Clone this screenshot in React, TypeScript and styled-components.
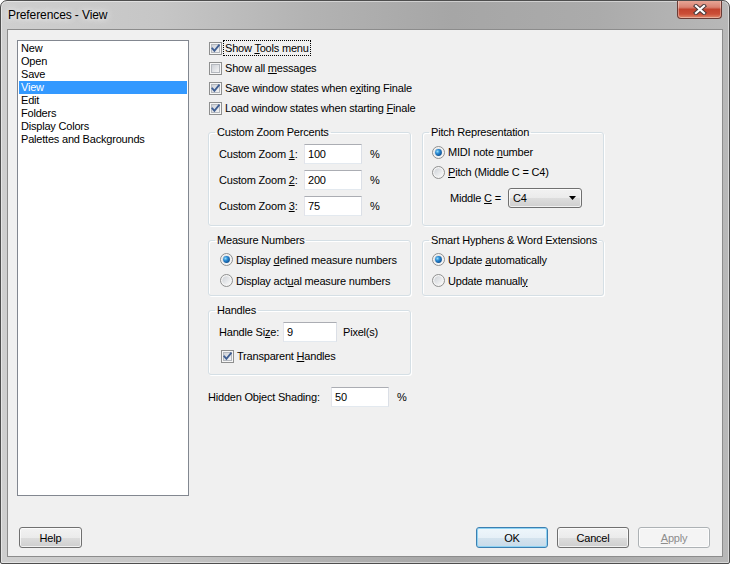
import React from "react";
import styled, { createGlobalStyle } from "styled-components";

const GlobalStyle = createGlobalStyle`
	* {
		box-sizing: border-box;
	}
	html,
	body {
		margin: 0;
		padding: 0;
		width: 730px;
		height: 564px;
		overflow: hidden;
		background: #ffffff;
	}
	body {
		font-family: "Liberation Sans", Arial, sans-serif;
		font-size: 11px;
		letter-spacing: -0.2px;
		color: #000;
	}
`;

const Window = styled.div`
	width: 730px;
	height: 564px;
	display: flex;
	flex-direction: column;
	border: 1px solid #4e4e4e;
	border-radius: 7px 7px 2px 2px;
	background: linear-gradient(
		90deg,
		#cfcfcf 0%,
		#c6c6c6 22%,
		#b3b3b3 42%,
		#a6a6a6 62%,
		#ababab 82%,
		#b8b8b8 100%
	);
	box-shadow: inset 0 0 0 1px rgba(255, 255, 255, 0.45);
	overflow: hidden;
`;

const TitleBar = styled.div`
	height: 28px;
	flex-shrink: 0;
	display: flex;
	align-items: flex-start;
	justify-content: space-between;
	padding: 0 7px 0 7px;
`;

const TitleText = styled.div`
	font-size: 12px;
	letter-spacing: -0.1px;
	line-height: 28px;
	color: #000;
	text-shadow:
		0 0 6px rgba(255, 255, 255, 0.95),
		0 0 12px rgba(255, 255, 255, 0.7);
`;

const CloseButton = styled.div`
	width: 45px;
	height: 19px;
	margin-top: -1px;
	display: flex;
	align-items: center;
	justify-content: center;
	border: 1px solid #6a3b35;
	border-top: none;
	border-radius: 0 0 4px 4px;
	background: linear-gradient(
		#e9aa9b 0%,
		#d98372 40%,
		#c2432e 52%,
		#cb4e37 78%,
		#e08a6c 100%
	);
	box-shadow: inset 0 0 0 1px rgba(255, 255, 255, 0.35);
`;

const Client = styled.div`
	flex: 1;
	margin: 0 6px 6px 6px;
	border: 1px solid #8c8c8c;
	background: #f0f0f0;
	display: flex;
	flex-direction: column;
	padding: 10px 12px 8px 9px;
`;

const Body = styled.div`
	display: flex;
	gap: 19px;
	height: 456px;
`;

const ListBox = styled.div`
	width: 172px;
	height: 456px;
	flex-shrink: 0;
	background: #fff;
	border: 1px solid #828790;
	padding: 1px;
`;

const ListItem = styled.div<{ $selected?: boolean }>`
	height: 13px;
	line-height: 13px;
	padding-left: 2px;
	white-space: nowrap;
	background: ${(p) => (p.$selected ? "#3399ff" : "transparent")};
	color: ${(p) => (p.$selected ? "#fff" : "#000")};
`;

const Panel = styled.div`
	display: flex;
	flex-direction: column;
	margin-top: -2px;
`;

const CheckRow = styled.div<{ $indent?: number }>`
	height: 20px;
	display: flex;
	align-items: center;
	gap: 3px;
	padding-left: ${(p) => p.$indent ?? 1}px;
	white-space: nowrap;
`;

const FocusLabel = styled.span`
	outline: 1px dotted #000;
	outline-offset: 0;
	padding: 0 1px;
	margin-left: -1px;
	line-height: 14px;
`;

const Key = styled.span`
	text-decoration: underline;
	text-underline-offset: 1px;
`;

const Groups = styled.div`
	display: grid;
	grid-template-columns: 203px 182px;
	column-gap: 11px;
	row-gap: 8px;
	margin-top: 8px;
`;

const Group = styled.fieldset`
	margin: 0;
	padding: 0;
	min-width: 0;
	border: 1px solid #d5dfe5;
	border-radius: 3px;
	box-shadow: inset 1px 1px 0 #fff, 1px 1px 0 #fff;
`;

const Legend = styled.legend`
	margin-left: 6px;
	padding: 0 2px;
	line-height: 13px;
	white-space: nowrap;
`;

const GroupBody = styled.div<{ $left: number; $top: number; $bottom: number }>`
	display: flex;
	flex-direction: column;
	padding: ${(p) => p.$top}px 4px ${(p) => p.$bottom}px ${(p) => p.$left}px;
`;

const FieldRow = styled.div<{ $h: number; $mt?: number; $ml?: number }>`
	height: ${(p) => p.$h}px;
	margin-top: ${(p) => p.$mt ?? 0}px;
	margin-left: ${(p) => p.$ml ?? 0}px;
	display: flex;
	align-items: center;
	white-space: nowrap;
`;

const FieldLabel = styled.span<{ $w: number }>`
	width: ${(p) => p.$w}px;
	flex-shrink: 0;
`;

const TextBox = styled.input<{ $w: number }>`
	width: ${(p) => p.$w}px;
	height: 20px;
	flex-shrink: 0;
	margin: 0;
	padding: 0 3px;
	font: inherit;
	letter-spacing: inherit;
	color: #000;
	background: #fff;
	border: 1px solid;
	border-color: #abadb3 #dbdfe6 #e3e9ef #e2e3ea;
	outline: none;
`;

const Unit = styled.span<{ $gap: number }>`
	margin-left: ${(p) => p.$gap}px;
`;

const RadioRow = styled.div<{ $h: number }>`
	height: ${(p) => p.$h}px;
	display: flex;
	align-items: center;
	gap: 3px;
	white-space: nowrap;
`;

const Combo = styled.div`
	width: 74px;
	height: 20px;
	display: flex;
	align-items: center;
	justify-content: space-between;
	padding: 0 5px 0 4px;
	border: 1px solid #707070;
	border-radius: 3px;
	background: linear-gradient(#f2f2f2 0%, #ebebeb 50%, #dddddd 51%, #cfcfcf 100%);
	box-shadow: inset 0 0 0 1px rgba(255, 255, 255, 0.7);
`;

const Footer = styled.div`
	margin-top: auto;
	height: 21px;
	display: flex;
	align-items: center;
`;

const Spacer = styled.div`
	flex: 1;
`;

const ButtonGroup = styled.div`
	display: flex;
	gap: 9px;
`;

const Button = styled.button<{ $w?: number; $variant?: "default" | "disabled" }>`
	width: ${(p) => p.$w ?? 72}px;
	height: 21px;
	margin: 0;
	padding: 0;
	font: inherit;
	letter-spacing: inherit;
	color: ${(p) => (p.$variant === "disabled" ? "#8d8d8d" : "#000")};
	border: 1px solid
		${(p) =>
			p.$variant === "default"
				? "#3c7fb1"
				: p.$variant === "disabled"
					? "#adb2b5"
					: "#707070"};
	border-radius: 3px;
	background: ${(p) =>
		p.$variant === "disabled"
			? "#f4f4f4"
			: p.$variant === "default"
				? "linear-gradient(#eef6fb 0%, #e6f0f7 50%, #d4e3ee 51%, #c8dbe9 100%)"
				: "linear-gradient(#f2f2f2 0%, #ebebeb 50%, #dddddd 51%, #cfcfcf 100%)"};
	box-shadow: ${(p) =>
		p.$variant === "default"
			? "inset 0 0 0 1px #8fd3f3"
			: "inset 0 0 0 1px rgba(255, 255, 255, 0.7)"};
`;

const HelpButton = styled(Button)`
	margin-left: 2px;
`;

const CheckBox: React.FC<{ checked?: boolean }> = ({ checked }) => (
	<svg width="13" height="13" viewBox="0 0 13 13" style={{ flexShrink: 0 }}>
		<defs>
			<linearGradient id="cbInner" x1="0" y1="0" x2="1" y2="1">
				<stop offset="0" stopColor="#cbcfd5" />
				<stop offset="1" stopColor="#f7f7f7" />
			</linearGradient>
		</defs>
		<rect x="0.5" y="0.5" width="12" height="12" fill="#f6f6f6" stroke="#8e8f8f" />
		<rect x="2.5" y="2.5" width="8" height="8" fill="url(#cbInner)" stroke="#b4b8be" />
		{checked && (
			<path
				d="M3.3 6.4 L5.4 8.8 L9.9 3.3"
				fill="none"
				stroke="#3f5e92"
				strokeWidth="1.8"
				strokeLinecap="square"
			/>
		)}
	</svg>
);

const Radio: React.FC<{ checked?: boolean }> = ({ checked }) => (
	<svg width="13" height="13" viewBox="0 0 13 13" style={{ flexShrink: 0 }}>
		<defs>
			<linearGradient id="rbInner" x1="0" y1="0" x2="1" y2="1">
				<stop offset="0" stopColor="#cdd1d6" />
				<stop offset="1" stopColor="#fafafa" />
			</linearGradient>
			<radialGradient id="rbDot" cx="0.35" cy="0.35" r="0.7">
				<stop offset="0" stopColor="#93dcf8" />
				<stop offset="0.45" stopColor="#2a8ad4" />
				<stop offset="1" stopColor="#0f4f8f" />
			</radialGradient>
		</defs>
		<circle cx="6.5" cy="6.5" r="6" fill="#f4f4f4" stroke="#8e8f8f" />
		<circle cx="6.5" cy="6.5" r="4.3" fill="url(#rbInner)" />
		{checked && <circle cx="6.5" cy="6.5" r="3.4" fill="url(#rbDot)" />}
	</svg>
);

const CloseGlyph: React.FC = () => (
	<svg width="14" height="11" viewBox="0 0 14 11">
		<path d="M3 2 L11 9 M11 2 L3 9" stroke="#4a3a3a" strokeWidth="4.2" strokeLinecap="square" />
		<path d="M3 2 L11 9 M11 2 L3 9" stroke="#ffffff" strokeWidth="2.2" strokeLinecap="square" />
	</svg>
);

const ComboArrow: React.FC = () => (
	<svg width="7" height="4" viewBox="0 0 7 4">
		<path d="M0 0 H7 L3.5 4 Z" fill="#000" />
	</svg>
);

const categories = [
	"New",
	"Open",
	"Save",
	"View",
	"Edit",
	"Folders",
	"Display Colors",
	"Palettes and Backgrounds",
];

const App: React.FC = () => {
	return (
		<>
			<GlobalStyle />
			<Window>
				<TitleBar>
					<TitleText>Preferences - View</TitleText>
					<CloseButton>
						<CloseGlyph />
					</CloseButton>
				</TitleBar>
				<Client>
					<Body>
						<ListBox>
							{categories.map((c) => (
								<ListItem key={c} $selected={c === "View"}>
									{c}
								</ListItem>
							))}
						</ListBox>
						<Panel>
							<CheckRow>
								<CheckBox checked />
								<FocusLabel>
									Show <Key>T</Key>ools menu
								</FocusLabel>
							</CheckRow>
							<CheckRow>
								<CheckBox />
								<span>
									Show all <Key>m</Key>essages
								</span>
							</CheckRow>
							<CheckRow>
								<CheckBox checked />
								<span>
									Save window states when e<Key>x</Key>iting Finale
								</span>
							</CheckRow>
							<CheckRow>
								<CheckBox checked />
								<span>
									Load window states when starting <Key>F</Key>inale
								</span>
							</CheckRow>

							<Groups>
								<Group>
									<Legend>Custom Zoom Percents</Legend>
									<GroupBody $left={10} $top={2} $bottom={6}>
										{[
											["1", "100"],
											["2", "200"],
											["3", "75"],
										].map(([n, v]) => (
											<FieldRow key={n} $h={26}>
												<FieldLabel $w={85}>
													Custom Zoom <Key>{n}</Key>:
												</FieldLabel>
												<TextBox $w={58} defaultValue={v} />
												<Unit $gap={8}>%</Unit>
											</FieldRow>
										))}
									</GroupBody>
								</Group>

								<Group>
									<Legend>Pitch Representation</Legend>
									<GroupBody $left={9} $top={3} $bottom={6}>
										<RadioRow $h={20}>
											<Radio checked />
											<span>
												MIDI note <Key>n</Key>umber
											</span>
										</RadioRow>
										<RadioRow $h={20}>
											<Radio />
											<span>
												<Key>P</Key>itch (Middle C = C4)
											</span>
										</RadioRow>
										<FieldRow $h={20} $mt={6} $ml={18}>
											<FieldLabel $w={58}>
												Middle <Key>C</Key> =
											</FieldLabel>
											<Combo>
												<span>C4</span>
												<ComboArrow />
											</Combo>
										</FieldRow>
									</GroupBody>
								</Group>

								<Group>
									<Legend>Measure Numbers</Legend>
									<GroupBody $left={11} $top={2} $bottom={4}>
										<RadioRow $h={21}>
											<Radio checked />
											<span>
												Display <Key>d</Key>efined measure numbers
											</span>
										</RadioRow>
										<RadioRow $h={21}>
											<Radio />
											<span>
												Display act<Key>u</Key>al measure numbers
											</span>
										</RadioRow>
									</GroupBody>
								</Group>

								<Group>
									<Legend>Smart Hyphens &amp; Word Extensions</Legend>
									<GroupBody $left={9} $top={2} $bottom={4}>
										<RadioRow $h={21}>
											<Radio checked />
											<span>
												Update <Key>a</Key>utomatically
											</span>
										</RadioRow>
										<RadioRow $h={21}>
											<Radio />
											<span>
												Update manuall<Key>y</Key>
											</span>
										</RadioRow>
									</GroupBody>
								</Group>

								<Group>
									<Legend>Handles</Legend>
									<GroupBody $left={10} $top={5} $bottom={8}>
										<FieldRow $h={20}>
											<FieldLabel $w={64}>
												Handle Si<Key>z</Key>e:
											</FieldLabel>
											<TextBox $w={54} defaultValue="9" />
											<Unit $gap={6}>Pixel(s)</Unit>
										</FieldRow>
										<CheckRow $indent={2} style={{ marginTop: 4 }}>
											<CheckBox checked />
											<span>
												Transparent <Key>H</Key>andles
											</span>
										</CheckRow>
									</GroupBody>
								</Group>
							</Groups>

							<FieldRow $h={20} $mt={12}>
								<FieldLabel $w={123}>Hidden Object Shading:</FieldLabel>
								<TextBox $w={58} defaultValue="50" />
								<Unit $gap={8}>%</Unit>
							</FieldRow>
						</Panel>
					</Body>
					<Footer>
						<HelpButton $w={63}>Help</HelpButton>
						<Spacer />
						<ButtonGroup>
							<Button $variant="default">OK</Button>
							<Button>Cancel</Button>
							<Button $variant="disabled">
								<Key>A</Key>pply
							</Button>
						</ButtonGroup>
					</Footer>
				</Client>
			</Window>
		</>
	);
};

export default App;
